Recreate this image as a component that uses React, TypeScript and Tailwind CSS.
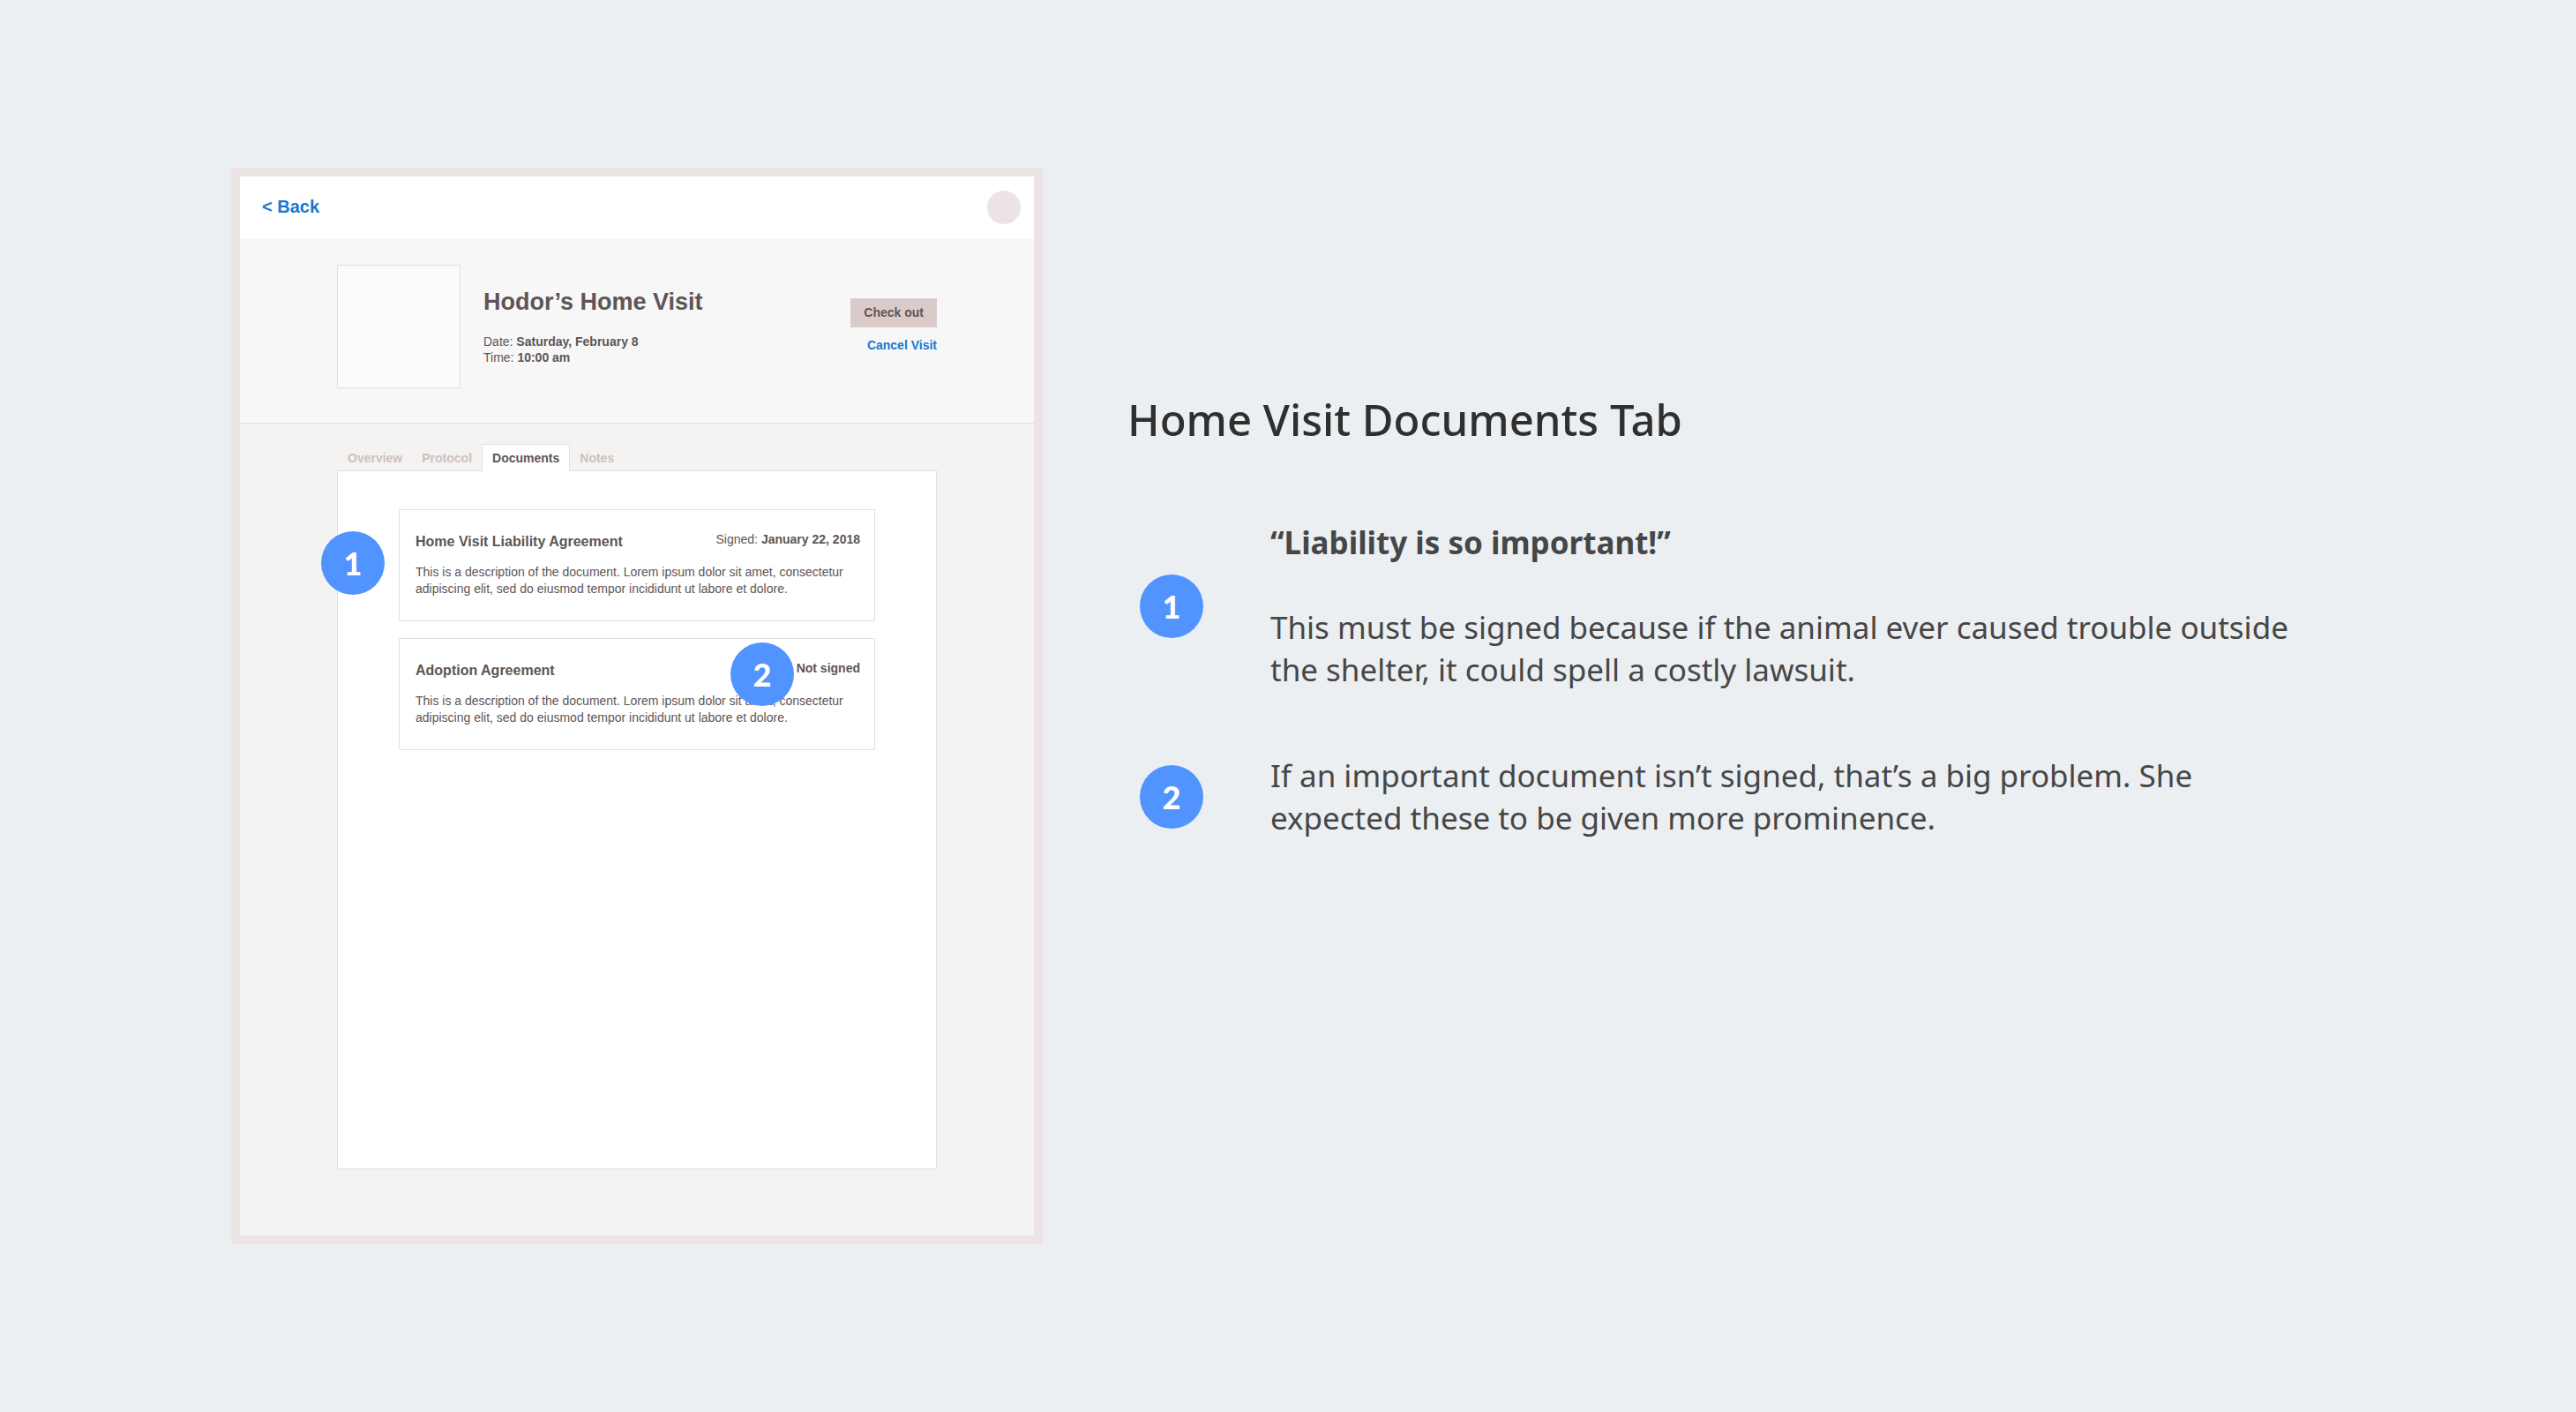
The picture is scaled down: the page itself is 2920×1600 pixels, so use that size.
import type { ReactNode } from "react";

function Badge({ n, className = "" }: { n: number; className?: string }) {
  return (
    <span
      className={`flex size-[72px] shrink-0 items-center justify-center rounded-full bg-[#5193ff] font-['Lato',sans-serif] text-[36px] leading-[48px] font-black text-white ${className}`}
    >
      {n}
    </span>
  );
}

const tabs = ["Overview", "Protocol", "Documents", "Notes"];

function DocumentCard({
  title,
  status,
  children,
}: {
  title: string;
  status: ReactNode;
  children: ReactNode;
}) {
  return (
    <article className="relative border border-[#e0e0e0] pt-[26px] pr-4 pb-[26px] pl-[18px]">
      <div className="flex items-start justify-between">
        <h3 className="text-[16px] leading-[20px] font-bold">{title}</h3>
        <p className="text-[14px] leading-[14px]">{status}</p>
      </div>
      <p className="mt-[15px] max-w-[490px] text-[14px] leading-[19px]">
        This is a description of the document. Lorem ipsum dolor sit amet, consectetur adipiscing
        elit, sed do eiusmod tempor incididunt ut labore et dolore.
      </p>
      {children}
    </article>
  );
}

function VisitScreen() {
  return (
    <section className="flex w-full max-w-[920px] flex-col border-10 border-[#ece3e4] bg-[#f4f3f1] font-['Liberation_Sans',Arial,sans-serif] text-[#5e5555]">
      <header className="flex h-[70px] items-center justify-between bg-white pr-[15px] pl-[25px]">
        <a href="#back" className="pb-[2px] text-[20px] leading-[24px] font-bold text-[#1877d0]">
          &lt; Back
        </a>
        <button type="button" aria-label="Account" className="size-[38px] rounded-full bg-[#ebe3e4]" />
      </header>

      <div className="border-b border-[#e0e0e0] bg-[#f7f7f7] pt-[30px] pb-[39px]">
        <div className="mx-auto flex w-full max-w-[680px] items-start">
          <div className="size-[140px] shrink-0 border border-[#e0e0e0] bg-[#fcfafc]" />
          <div className="grow pt-[26px] pl-[26px]">
            <h1 className="text-[27px] leading-[32px] font-bold">Hodor’s Home Visit</h1>
            <p className="mt-5 text-[14px] leading-[18px]">
              Date: <b>Saturday, February 8</b>
              <br />
              Time: <b>10:00 am</b>
            </p>
          </div>
          <div className="flex flex-col items-end pt-[38px]">
            <button
              type="button"
              className="h-[33px] bg-[#dbcaca] px-[15px] pb-[2px] text-[14px] leading-[18px] font-bold"
            >
              Check out
            </button>
            <a href="#cancel" className="mt-[11px] text-[14px] leading-[18px] font-bold text-[#1877d0]">
              Cancel Visit
            </a>
          </div>
        </div>
      </div>

      <div className="mx-auto w-full max-w-[680px] pt-[23px] pb-[75px]">
        <div role="tablist" className="flex pl-px text-[14px] leading-[18px] font-bold">
          {tabs.map((tab) =>
            tab === "Documents" ? (
              <button
                key={tab}
                type="button"
                role="tab"
                aria-selected="true"
                className="z-10 -mb-px border border-b-0 border-[#e0e0e0] bg-white px-[11px] pt-[6px] pb-[6px]"
              >
                {tab}
              </button>
            ) : (
              <button
                key={tab}
                type="button"
                role="tab"
                aria-selected="false"
                className="px-[11px] pt-[7px] pb-[5px] text-[#d0bfc0]"
              >
                {tab}
              </button>
            ),
          )}
        </div>
        <div className="flex min-h-[792px] flex-col gap-[19px] border border-[#e0e0e0] bg-white px-[69px] pt-[43px]">
          <DocumentCard
            title="Home Visit Liability Agreement"
            status={
              <>
                Signed: <b>January 22, 2018</b>
              </>
            }
          >
            <Badge n={1} className="absolute top-[24px] left-[-89px]" />
          </DocumentCard>
          <DocumentCard title="Adoption Agreement" status={<b>Not signed</b>}>
            <Badge n={2} className="absolute top-[4px] right-[91px]" />
          </DocumentCard>
        </div>
      </div>
    </section>
  );
}

export default function App() {
  return (
    <main className="flex min-h-screen items-center bg-[#ebeff2] pr-[220px] pl-[262px]">
      <VisitScreen />
      <section className="w-full max-w-[1440px] shrink-0 self-start pt-[443px] pl-24 font-['Noto_Sans',sans-serif] text-[#464646]">
        <h2 className="text-[49px] leading-[64px] font-medium text-[#2f2f2f]">Home Visit Documents Tab</h2>
        <ol className="mt-[84px] flex flex-col gap-[72px] pl-[14px] text-[35px] leading-[48px]">
          <li className="flex items-center gap-[76px]">
            <Badge n={1} />
            <div>
              <p className="font-bold">“Liability is so important!”</p>
              <p className="mt-12">
                This must be signed because if the animal ever caused trouble outside the shelter, it
                could spell a costly lawsuit.
              </p>
            </div>
          </li>
          <li className="flex items-center gap-[76px]">
            <Badge n={2} />
            <p>
              If an important document isn’t signed, that’s a big problem. She expected these to be
              given more prominence.
            </p>
          </li>
        </ol>
      </section>
    </main>
  );
}
